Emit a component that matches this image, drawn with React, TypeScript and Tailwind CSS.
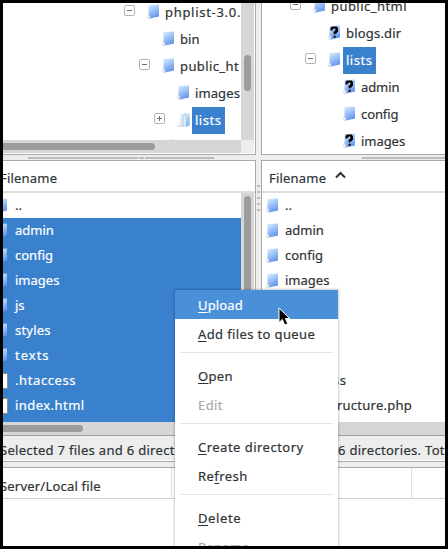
import React from "react";

type IconKind = "folder" | "unknown" | "open" | "file";

function FileIcon({ kind = "folder" }: { kind?: IconKind }) {
  if (kind === "file") {
    return (
      <svg width="14" height="16" viewBox="0 0 14 16" className="block shrink-0">
        <rect x="0.5" y="0.5" width="12" height="15" fill="#fff" stroke="#8f8f8a" />
      </svg>
    );
  }
  if (kind === "open") {
    return (
      <svg width="14" height="16" viewBox="0 0 14 16" className="block shrink-0">
        <defs>
          <linearGradient id="openBack" x1="0" y1="0" x2="0" y2="1">
            <stop offset="0" stopColor="#f6fbff" />
            <stop offset="1" stopColor="#cfe2f3" />
          </linearGradient>
          <linearGradient id="openFront" x1="0" y1="0" x2="0" y2="1">
            <stop offset="0" stopColor="#cbe6f8" />
            <stop offset="1" stopColor="#84b6ea" />
          </linearGradient>
        </defs>
        <path d="M4 1.5 L8 0.5 V13 L5 15 L4 12Z" fill="url(#openBack)" />
        <path d="M4 2 V11 L0.5 14.5 L4 14.5 L5.5 12" fill="#e9eef3" stroke="#ccd6df" strokeWidth="0.7" />
        <path d="M5.5 3 L9 1 V14 L5.5 15Z" fill="#a9cef0" />
        <path d="M6.5 4 L8.5 3 V13 L6.5 14Z" fill="#e6f3fd" />
        <path d="M9 2 L13 1 V13 L9 15Z" fill="url(#openFront)" />
      </svg>
    );
  }
  return (
    <svg width="14" height="16" viewBox="0 0 14 16" className="block shrink-0">
      <defs>
        <linearGradient id="folderFill" x1="0.3" y1="0" x2="0.7" y2="1">
          <stop offset="0" stopColor="#cde6fc" />
          <stop offset="0.4" stopColor="#9fc4f8" />
          <stop offset="1" stopColor="#5c8ee8" />
        </linearGradient>
      </defs>
      <path d="M1.5 1 L12 0.5 V12.5 L3 14.5 L1.5 13Z" fill="url(#folderFill)" />
      <path d="M1.5 9.5 L3 12 V14.8 L0.5 14Z" fill="#eceff3" stroke="#bcc5d2" strokeWidth="0.5" />
      {kind === "unknown" && (
        <g fill="none" stroke="#000" strokeWidth="2">
          <path d="M3.5 5.5 V3.5 H4.5 V2.5 H8 V3.5 H9 V6 H8 V7.2 H6.6 V9.2 M6.6 10.8 V12.8" />
        </g>
      )}
    </svg>
  );
}

function Expander({ plus = false }: { plus?: boolean }) {
  return (
    <svg width="11" height="11" viewBox="0 0 11 11" className="block shrink-0">
      <rect x="0.5" y="0.5" width="10" height="10" rx="1.5" fill="#fff" stroke="#b4b4ae" />
      <path d={plus ? "M3 5.5 H8 M5.5 3 V8" : "M3 5.5 H8"} stroke="#6a6f70" fill="none" />
    </svg>
  );
}

interface TreeNode {
  label: string;
  pad: string;
  kind?: IconKind;
  expander?: "plus" | "minus";
  selected?: boolean;
  tracking?: string;
}

function TreeRow({ label, pad, kind, expander, selected, tracking = "tracking-[0.1px]" }: TreeNode) {
  return (
    <div className={`flex h-[27px] shrink-0 items-center ${pad}`}>
      <div className="mb-1 w-[23px] shrink-0">{expander && <Expander plus={expander === "plus"} />}</div>
      <div className="mb-px">
        <FileIcon kind={kind} />
      </div>
      <span
        className={`ml-px flex h-[27px] items-center pl-[3px] ${selected ? "w-[33px] bg-[#3981cd] text-white" : ""} ${tracking}`}
      >
        {label}
      </span>
    </div>
  );
}

const localTree: TreeNode[] = [
  { label: "phplist-3.0.", pad: "pl-[121px]", expander: "minus", tracking: "tracking-[0.7px]" },
  { label: "bin", pad: "pl-[136px]" },
  { label: "public_ht", pad: "pl-[136px]", expander: "minus", tracking: "tracking-[0.4px]" },
  { label: "images", pad: "pl-[151px]" },
  { label: "lists", pad: "pl-[151px]", kind: "open", expander: "plus", selected: true, tracking: "tracking-[0.5px]" },
  { label: "", pad: "pl-[136px]" },
];

const remoteTree: TreeNode[] = [
  { label: "public_html", pad: "pl-[28px]", expander: "minus", tracking: "tracking-[0.45px]" },
  { label: "blogs.dir", pad: "pl-[43px]", kind: "unknown", tracking: "tracking-[0.2px]" },
  { label: "lists", pad: "pl-[43px]", expander: "minus", selected: true, tracking: "tracking-[0.5px]" },
  { label: "admin", pad: "pl-[58px]", kind: "unknown", tracking: "tracking-[-0.1px]" },
  { label: "config", pad: "pl-[58px]", tracking: "tracking-[-0.1px]" },
  { label: "images", pad: "pl-[58px]", kind: "unknown", tracking: "tracking-[-0.05px]" },
];

const localFiles: { label: string; kind?: IconKind; tracking?: string }[] = [
  { label: "admin" },
  { label: "config" },
  { label: "images" },
  { label: "js" },
  { label: "styles", tracking: "tracking-[0.2px]" },
  { label: "texts", tracking: "tracking-[1px]" },
  { label: ".htaccess", kind: "file", tracking: "tracking-[0.6px]" },
  { label: "index.html", kind: "file", tracking: "tracking-[0.45px]" },
];

function LocalRow({ label, kind, tracking = "" }: { label: string; kind?: IconKind; tracking?: string }) {
  return (
    <div className="flex h-[25px] shrink-0 items-center">
      <div className="mr-[6px] -ml-[8px]">
        <FileIcon kind={kind} />
      </div>
      <span className={tracking}>{label}</span>
    </div>
  );
}

function RemoteRow({ label, tracking = "" }: { label: string; tracking?: string }) {
  return (
    <div className="flex h-[25px] shrink-0 items-center pl-[4px]">
      <FileIcon />
      <span className={`ml-[5px] ${tracking}`}>{label}</span>
    </div>
  );
}

interface MenuItemProps {
  before?: string;
  mnemonic?: string;
  after: string;
  state?: string;
  tracking?: string;
}

function MenuItem({ before = "", mnemonic = "", after, state = "", tracking = "" }: MenuItemProps) {
  return (
    <div className={`flex h-[29px] shrink-0 items-center pt-[2px] pl-[23px] ${state}`}>
      <span className={tracking}>
        {before}
        <span className="underline decoration-1 underline-offset-2">{mnemonic}</span>
        {after}
      </span>
    </div>
  );
}

function Separator() {
  return (
    <div className="h-[13px] shrink-0 px-[5px] pt-[4px]">
      <div className="h-px bg-[#e2e2e2]" />
    </div>
  );
}

export default function App() {
  return (
    <div className="relative h-[549px] w-[448px] overflow-hidden border-[3px] border-black bg-[#ededed] font-['Noto_Sans','Open_Sans',sans-serif] text-[13px] leading-none whitespace-nowrap text-[#2e3436] [-webkit-text-stroke:0.2px]">
      <div className="flex h-[543px] flex-col overflow-hidden">
        {/* Directory trees */}
        <div className="flex h-[152px] shrink-0">
          <div className="flex w-[253px] shrink-0 flex-col border-r border-b border-[#a9a9a5] bg-white">
            <div className="flex h-[137px]">
              <div className="flex w-[238px] flex-col overflow-hidden">
                <div className="-mt-[4px] flex flex-col">
                  {localTree.map((n, i) => <TreeRow key={i} {...n} />)}
                </div>
              </div>
              <div className="w-[13px] bg-[#d6d6d6] px-[3px] pt-[52px]">
                <div className="h-[36px] rounded-full bg-[#9b9c9e]" />
              </div>
            </div>
            <div className="flex h-[13px]">
              <div className="w-[238px] bg-[#d6d6d6] py-[3px]">
                <div className="h-[7px] w-[152px] rounded-r-full bg-[#9b9c9e]" />
              </div>
              <div className="w-[13px] bg-[#ededed]" />
            </div>
          </div>
          <div className="w-[5px]" />
          <div className="flex flex-1 flex-col overflow-hidden border-b border-l border-[#a9a9a5] bg-white">
            <div className="-mt-[10px] flex flex-col">
              {remoteTree.map((n, i) => <TreeRow key={i} {...n} />)}
            </div>
          </div>
        </div>

        {/* Horizontal splitter */}
        <div className="flex h-[5px] shrink-0 items-center">
          <div className="ml-[25px] h-[2px] w-[110px] bg-[#bcbdb9]" />
          <div className="ml-px h-[2px] w-[5px] bg-[#bcbdb9]" />
          <div className="ml-px h-[2px] w-[69px] bg-[#bcbdb9]" />
          <div className="ml-[148px] h-[2px] w-[83px] bg-[#bcbdb9]" />
        </div>

        {/* File lists */}
        <div className="flex h-[275px] shrink-0">
          <div className="flex w-[253px] shrink-0 flex-col border-t border-r border-[#a9a9a5] bg-white">
            <div className="flex h-[32px] shrink-0 items-center border-b-2 border-[#dededc]">
              <span className="-ml-[3px] pt-[5px] tracking-[0.2px]">Filename</span>
            </div>
            <div className="flex h-[229px]">
              <div className="w-[238px] overflow-hidden">
                <LocalRow label=".." />
                <div className="h-[204px] bg-[#3981cd] text-white">
                  {localFiles.map((f) => <LocalRow key={f.label} {...f} />)}
                </div>
              </div>
              <div className="w-[13px] bg-[#d6d6d6] px-[3px] pt-[3px]">
                <div className="h-[222px] rounded-full bg-[#9b9c9e]" />
              </div>
            </div>
            <div className="h-[13px] bg-[#d6d6d6] py-[3px]">
              <div className="h-[7px] w-[80px] rounded-r-full bg-[#9b9c9e]" />
            </div>
          </div>
          <div className="flex w-[5px] shrink-0 flex-col items-center gap-[4px] pt-[25px]">
            {[0, 1, 2, 3, 4].map((i) => <div key={i} className="h-[2px] w-[3px] shrink-0 bg-[#bcbdb9]" />)}
          </div>
          <div className="flex flex-1 flex-col border-t border-l border-[#a9a9a5] bg-white">
            <div className="flex h-[32px] shrink-0 items-center border-b-2 border-[#dededc]">
              <span className="w-[73px] shrink-0 pt-[5px] pl-[7px] tracking-[0.2px]">Filename</span>
              <svg width="11" height="8" viewBox="0 0 11 8" className="mb-[2px] block">
                <path d="M1 6.5 L5.5 2 L10 6.5" fill="none" stroke="#2e3436" strokeWidth="2" />
              </svg>
            </div>
            <div className="h-[229px] shrink-0 overflow-hidden">
              <RemoteRow label=".." />
              <RemoteRow label="admin" />
              <RemoteRow label="config" />
              <RemoteRow label="images" />
              <RemoteRow label="js" />
              <RemoteRow label="styles" />
              <RemoteRow label="texts" />
              <RemoteRow label=".htaccess" tracking="tracking-[0.65px]" />
              <div className="flex h-[25px] w-[150px] items-center justify-end tracking-[0.25px]">structure.php</div>
            </div>
            <div className="h-[13px] shrink-0 bg-[#d6d6d6]" />
          </div>
        </div>

        {/* Status lines */}
        <div className="flex h-[29px] shrink-0 border-t border-[#a09f9c] pt-px">
          <div className="flex h-[24px] w-[253px] shrink-0 items-center overflow-hidden border-b border-white">
            <span className="-ml-[3px] pt-[3px] tracking-[0.3px]">Selected 7 files and 6 directories.</span>
          </div>
          <div className="flex h-[24px] w-[189px] shrink-0 items-center overflow-hidden border-b border-white pl-[82px]">
            <span className="pt-[3px] tracking-[0.3px]">6 directories. Total size</span>
          </div>
        </div>
        <div className="-mt-[3px] h-[7px] shrink-0 border-y border-[#a9a9a5] bg-[#ededed]" />

        {/* Transfer queue */}
        <div className="flex h-[31px] shrink-0 border-b border-[#cfcfcd] bg-white">
          <div className="flex w-[169px] items-center border-r border-[#dededc]">
            <span className="-ml-[3px] pt-[6px] tracking-[0.2px]">Server/Local file</span>
          </div>
          <div className="w-[240px] border-r border-[#dededc]" />
        </div>
        <div className="flex-1 bg-white" />
      </div>

      {/* Context menu */}
      <div className="absolute top-[287px] left-[172px] flex h-[256px] w-[163px] flex-col overflow-hidden bg-white shadow-[0_0_2px_1px_rgba(0,0,0,0.2)]">
        <MenuItem mnemonic="U" after="pload" state="bg-[#4a90d9] text-white" tracking="tracking-[0.15px]" />
        <MenuItem mnemonic="A" after="dd files to queue" tracking="tracking-[0.37px]" />
        <Separator />
        <MenuItem mnemonic="O" after="pen" tracking="tracking-[0.3px]" />
        <MenuItem after="Edit" state="text-[#a9abac]" tracking="tracking-[0.4px]" />
        <Separator />
        <MenuItem mnemonic="C" after="reate directory" tracking="tracking-[0.48px]" />
        <MenuItem before="Re" mnemonic="f" after="resh" tracking="tracking-[0.45px]" />
        <Separator />
        <MenuItem mnemonic="D" after="elete" tracking="tracking-[0.6px]" />
        <MenuItem mnemonic="R" after="ename" state="text-[#a9abac]" tracking="tracking-[0.2px]" />
      </div>

      {/* Mouse pointer */}
      <svg width="13" height="20" viewBox="0 0 13 20" className="absolute top-[304px] left-[275px]">
        <path d="M1 1 V15.5 L4.3 12.5 L6.7 18 L9.8 16.8 L7.4 11.5 H11.8Z" fill="#000" stroke="#fff" strokeWidth="1" />
      </svg>
    </div>
  );
}
